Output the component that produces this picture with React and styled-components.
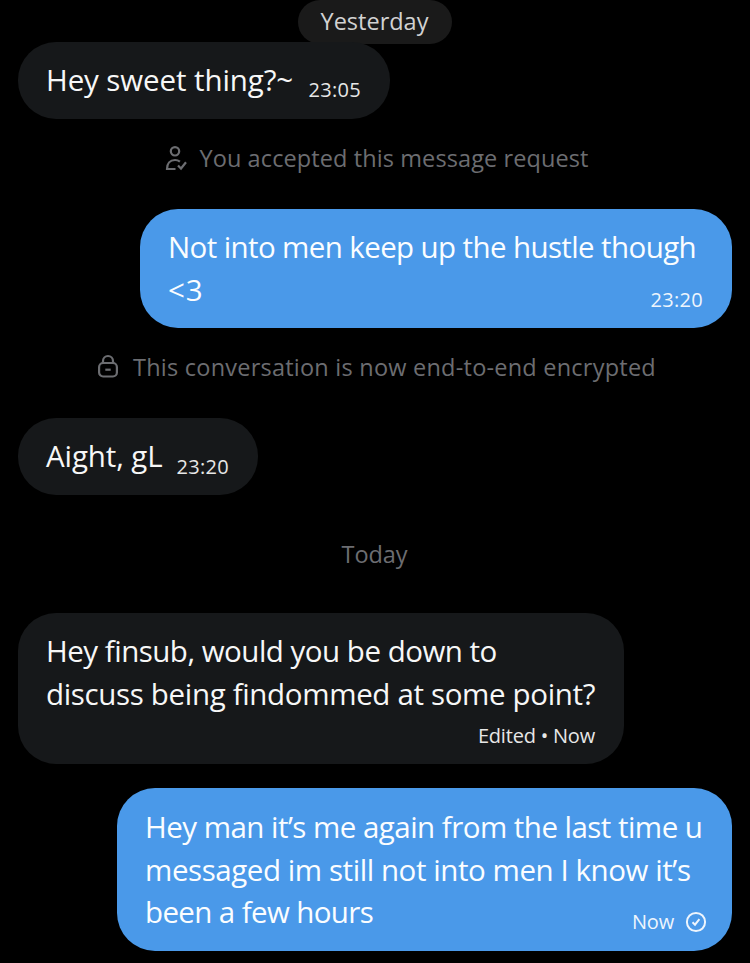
// Direct message thread
import React from 'react';
import styled, { createGlobalStyle } from 'styled-components';

const GlobalStyle = createGlobalStyle`
  body {
    margin: 0;
    background: #000;
    overflow: hidden;
  }
`;

const Thread = styled.main`
  box-sizing: border-box;
  width: 750px;
  height: 963px;
  padding: 0 18px;
  overflow: hidden;
  display: flex;
  flex-direction: column;
  background: #000;
  font-family: 'Open Sans', 'Noto Sans', sans-serif;
`;

const DayPill = styled.div`
  flex: none;
  align-self: center;
  box-sizing: border-box;
  width: 154px;
  height: 44px;
  margin-bottom: -2px;
  padding-right: 1px;
  border-radius: 22px;
  background: #1a1a1a;
  color: #d2d2d2;
  font-size: 23.5px;
  line-height: 43px;
  text-align: center;
`;

const DayLabel = styled.div`
  flex: none;
  margin: 42px 0;
  padding-right: 1px;
  color: #6c6d71;
  font-size: 23.5px;
  line-height: 34px;
  text-align: center;
  letter-spacing: -0.1px;
`;

const Notice = styled.div`
  flex: none;
  display: flex;
  justify-content: center;
  align-items: center;
  gap: ${props => props.$gap}px;
  height: 34px;
  margin: 22.2px 0 33.9px;
  padding-left: 4px;
  color: #6c6d71;
  font-size: 23.5px;
  line-height: 34px;
  white-space: nowrap;
  letter-spacing: ${props => props.$spacing || 0}px;

  svg {
    flex: none;
  }
`;

const Bubble = styled.div`
  flex: none;
  box-sizing: border-box;
  align-self: ${props => props.$sent ? 'flex-end' : 'flex-start'};
  width: ${props => props.$width}px;
  padding: 17.3px 28px 16.5px;
  margin-top: ${props => props.$gap || 0}px;
  border-radius: 38px;
  background: ${props => props.$sent ? '#4a99e9' : '#16181a'};
  color: ${props => props.$sent ? '#fbfdff' : '#f7f7f7'};
`;

const Line = styled.div`
  font-size: 29.5px;
  line-height: 42.8px;
  height: 42.8px;
  white-space: nowrap;
  letter-spacing: ${props => props.$spacing || 0}px;
`;

const LastRow = styled.div`
  display: flex;
  justify-content: space-between;
  align-items: flex-end;
`;

const Meta = styled.div`
  display: flex;
  justify-content: flex-end;
  align-items: center;
  gap: 11px;
  height: 24px;
  margin-top: ${props => props.$below ? 8.5 : 0}px;
  margin-right: 1px;
  margin-bottom: ${props => props.$below ? -1 : -0.3}px;
  font-size: 20px;
  line-height: 24px;
  white-space: nowrap;
  letter-spacing: ${props => props.$spacing || 0}px;
  opacity: 0.93;

  svg {
    flex: none;
    margin-right: -4px;
  }
`;

const PersonCheckIcon = () => (
  <svg width="22" height="26" viewBox="0 0 22 26" fill="none" stroke="currentColor" strokeWidth="2.2">
    <circle cx="10" cy="6.3" r="4.2" />
    <path d="M10.500 24H2c0-5.500 3-9 8-9 1.900 0 3.500.6 4.900 1.700" />
    <path d="M13 20.500l3 3 5-6.200" />
  </svg>
);

const LockIcon = () => (
  <svg width="20" height="26" viewBox="0 0 20 26" fill="none" stroke="currentColor" strokeWidth="2.2">
    <rect x="1.100" y="9" width="17.800" height="13.500" rx="4" />
    <path d="M5 9V7C5 4.200 7.200 2 10 2s5 2.200 5 5v2" />
    <path d="M7.300 15.700h5.400" />
  </svg>
);

const SentIcon = () => (
  <svg width="22" height="22" viewBox="0 0 22 22" fill="none" stroke="currentColor" strokeWidth="2">
    <circle cx="11" cy="11" r="9.100" />
    <path d="M7.500 11.200l2.500 2.500 4.400-5.600" />
  </svg>
);

const Message = ({ sent, width, gap, lines, meta, metaSpacing, metaBelow, delivered }) => {
  const body = metaBelow ? lines : lines.slice(0, -1);
  const last = lines[lines.length - 1];
  const footer = (
    <Meta $below={metaBelow} $spacing={metaSpacing}>
      <span>{meta}</span>
      {delivered && <SentIcon />}
    </Meta>
  );

  return (
    <Bubble $sent={sent} $width={width} $gap={gap}>
      {body.map(([text, spacing]) => (
        <Line key={text} $spacing={spacing}>{text}</Line>
      ))}
      {metaBelow ? footer : (
        <LastRow>
          <Line $spacing={last[1]}>{last[0]}</Line>
          {footer}
        </LastRow>
      )}
    </Bubble>
  );
};

const App = () => (
  <>
    <GlobalStyle />
    <Thread>
      <DayPill>Yesterday</DayPill>
      <Message width={372} lines={[['Hey sweet thing?~', -0.1]]} meta="23:05" metaSpacing={0.3} />
      <Notice $gap={12} $spacing={0.1}>
        <PersonCheckIcon />
        <span>You accepted this message request</span>
      </Notice>
      <Message
        sent
        width={592}
        lines={[['Not into men keep up the hustle though', -0.61], ['<3', 1]]}
        meta="23:20"
        metaSpacing={0.3}
      />
      <Notice $gap={15} $spacing={0.23}>
        <LockIcon />
        <span>This conversation is now end-to-end encrypted</span>
      </Notice>
      <Message width={240} lines={[['Aight, gL', -0.1]]} meta="23:20" metaSpacing={0.3} />
      <DayLabel>Today</DayLabel>
      <Message
        width={606}
        lines={[['Hey finsub, would you be down to', -0.5], ['discuss being findommed at some point?', -0.34]]}
        meta="Edited • Now"
        metaSpacing={-0.2}
        metaBelow
      />
      <Message
        sent
        width={615}
        gap={24.8}
        lines={[
          ['Hey man it’s me again from the last time u', -0.53],
          ['messaged im still not into men I know it’s', -0.43],
          ['been a few hours', -0.62],
        ]}
        meta="Now"
        metaSpacing={-0.2}
        delivered
      />
    </Thread>
  </>
);

export default App;
